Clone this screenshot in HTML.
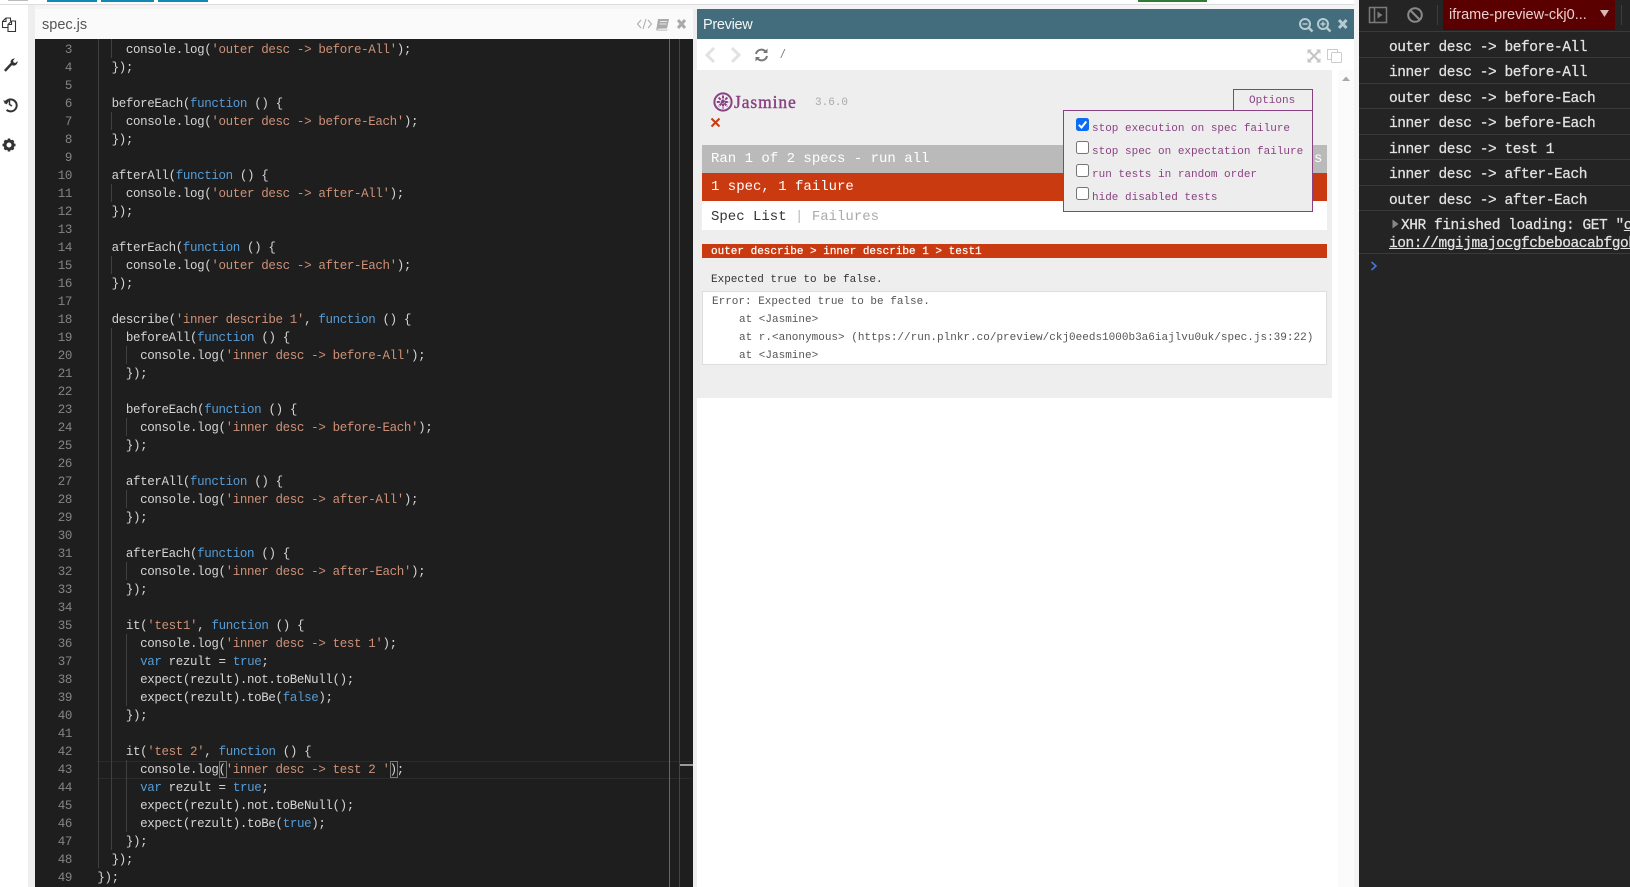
<!DOCTYPE html>
<html lang="en">
<head>
<meta charset="utf-8">
<title>spec.js - Plunker</title>
<style>
html,body{margin:0;padding:0;width:1630px;height:887px;overflow:hidden;background:#f4f4f4;font-family:"Liberation Sans",sans-serif}
.a{position:absolute}
#code,#nums{position:absolute;top:41px;margin:0;font:12.5px/18px "Liberation Mono",monospace;letter-spacing:-.375px;color:#d4d4d4;white-space:pre}
#code{left:97.4px}
#nums{left:35px;width:37px;text-align:right;color:#858585}
.k{color:#569cd6}.s{color:#ce9178}
.g{position:absolute;width:1px;background:#404040}
.m{font-family:"Liberation Mono",monospace;white-space:pre}
.con{position:absolute;left:1389px;font:14.5px/18px "Liberation Mono",monospace;letter-spacing:-.45px;color:#e2e2e2;white-space:pre;-webkit-text-stroke:.25px #e2e2e2}
.dl{position:absolute;left:1359px;right:0;height:1px;background:#3a3a3a}
.cb{position:absolute;left:1076px;width:11px;height:11px;border:1px solid #767676;border-radius:2.5px;background:#fff}
.ol{position:absolute;left:1092px;font:11px/14px "Liberation Mono",monospace;color:#8a4182;white-space:pre}
.tr{position:absolute;left:739px;font:11px/18px "Liberation Mono",monospace;color:#555;white-space:pre}
</style>
</head>
<body>
<!-- top strip -->
<div class="a" style="left:0;top:0;width:1630px;height:4px;background:#fff"></div>
<div class="a" style="left:0;top:4px;width:1630px;height:1px;background:#ddd"></div>
<div class="a" style="left:8px;top:0;width:20px;height:1px;background:#bbb"></div>
<div class="a" style="left:47px;top:0;width:50px;height:2px;background:#0e8ab5"></div>
<div class="a" style="left:101px;top:0;width:53px;height:2px;background:#0e8ab5"></div>
<div class="a" style="left:158px;top:0;width:50px;height:2px;background:#0e8ab5"></div>
<div class="a" style="left:1138px;top:0;width:69px;height:2px;background:#2e7d32"></div>

<!-- left sidebar -->
<div class="a" style="left:0;top:5px;width:28px;height:882px;background:#fff"></div>
<div class="a" style="left:28px;top:5px;width:7px;height:882px;background:#eeeeee"></div>
<svg class="a" style="left:0;top:14px" width="28" height="160" viewBox="0 0 28 160" fill="none">
<path d="M8 13.500H2.500V7.500L6 4h4.500v3" stroke="#333" stroke-width="1.100"/>
<path d="M6 4v3.500H2.500" stroke="#333" stroke-width="1"/>
<path d="M11.500 7H15.500V17.500H8V10.500zM11.500 7v3.500H8" stroke="#333" stroke-width="1.100"/>
<g transform="translate(0,-1)">
<path d="M4 57l7-7.500 1.800 1.800-7 7.500zM10.500 49a4 4 0 0 1 4.500-3.500l-2 2.200.7 1.800 1.800.5 2-2a4 4 0 0 1-5 4.500z" fill="#333"/>
</g>
<g transform="translate(0,3)">
<path d="M5 86.500a6 6 0 1 1 1.600 6.300" stroke="#333" stroke-width="2"/>
<path d="M3 83.500l3.500 4 2.500-3.500z" fill="#333"/>
<path d="M9.500 83.500v4l2.500 1.500" stroke="#333" stroke-width="1.500"/>
</g>
<circle cx="9" cy="131" r="4" stroke="#333" stroke-width="3"/>
<path d="M9 124.500v2.500M9 135v2.500M2.500 131H5M13 131h2.500M4.500 126.500l1.700 1.700M11.800 133.800l1.700 1.700M4.500 135.500l1.700-1.700M11.800 128.200l1.700-1.700" stroke="#333" stroke-width="2.400"/>
</svg>

<!-- editor -->
<div class="a" style="left:35px;top:9px;width:658px;height:30px;background:#fafafa"></div>
<div class="a" style="left:42px;top:16px;font-size:14.500px;line-height:18px;color:#555">spec.js</div>
<svg class="a" style="left:636px;top:16px" width="52" height="16" viewBox="0 0 52 16" fill="none">
<path d="M5 4L1.500 8 5 12M12 4l3.500 4L12 12M10 3L7 13" stroke="#aaa" stroke-width="1"/>
<path d="M22 3h11l-2 9.500H20.500zM20.500 12.500c-.8 1.500 0 2 1 2H31l.5-1.200" fill="#aaa"/>
<path d="M24 5.500h7M23.500 8h7" stroke="#fafafa" stroke-width=".8"/>
<path d="M21.500 13.300H31" stroke="#fafafa" stroke-width=".8"/>
<path d="M42 4l7 8M49 4l-7 8" stroke="#aaa" stroke-width="3"/>
</svg>
<div class="a" style="left:35px;top:39px;width:658px;height:848px;background:#1e1e1e;overflow:hidden"></div>

<div class="a" style="left:97px;top:761px;width:594px;height:16px;border:solid #2b2b2b;border-width:1px 0"></div>

<!-- indent guides -->
<div class="g" style="left:97.700px;top:39px;height:829px"></div>
<div class="g" style="left:111.400px;top:39px;height:19px"></div>
<div class="g" style="left:111.400px;top:112px;height:18px"></div>
<div class="g" style="left:111.400px;top:184px;height:18px"></div>
<div class="g" style="left:111.400px;top:256px;height:18px"></div>
<div class="g" style="left:111.400px;top:328px;height:522px"></div>
<div class="g" style="left:126px;top:346px;height:18px"></div>
<div class="g" style="left:126px;top:418px;height:18px"></div>
<div class="g" style="left:126px;top:490px;height:18px"></div>
<div class="g" style="left:126px;top:562px;height:18px"></div>
<div class="g" style="left:126px;top:634px;height:72px"></div>
<div class="g" style="left:126px;top:760px;height:72px"></div>

<pre id="nums">3
4
5
6
7
8
9
10
11
12
13
14
15
16
17
18
19
20
21
22
23
24
25
26
27
28
29
30
31
32
33
34
35
36
37
38
39
40
41
42
43
44
45
46
47
48
49</pre>
<pre id="code">    console.log(<span class="s">'outer desc -&gt; before-All'</span>);
  });

  beforeEach(<span class="k">function</span> () {
    console.log(<span class="s">'outer desc -&gt; before-Each'</span>);
  });

  afterAll(<span class="k">function</span> () {
    console.log(<span class="s">'outer desc -&gt; after-All'</span>);
  });

  afterEach(<span class="k">function</span> () {
    console.log(<span class="s">'outer desc -&gt; after-Each'</span>);
  });

  describe(<span class="s">'inner describe 1'</span>, <span class="k">function</span> () {
    beforeAll(<span class="k">function</span> () {
      console.log(<span class="s">'inner desc -&gt; before-All'</span>);
    });

    beforeEach(<span class="k">function</span> () {
      console.log(<span class="s">'inner desc -&gt; before-Each'</span>);
    });

    afterAll(<span class="k">function</span> () {
      console.log(<span class="s">'inner desc -&gt; after-All'</span>);
    });

    afterEach(<span class="k">function</span> () {
      console.log(<span class="s">'inner desc -&gt; after-Each'</span>);
    });

    it(<span class="s">'test1'</span>, <span class="k">function</span> () {
      console.log(<span class="s">'inner desc -&gt; test 1'</span>);
      <span class="k">var</span> rezult = <span class="k">true</span>;
      expect(rezult).not.toBeNull();
      expect(rezult).toBe(<span class="k">false</span>);
    });

    it(<span class="s">'test 2'</span>, <span class="k">function</span> () {
      console.log(<span class="s">'inner desc -&gt; test 2 '</span>);
      <span class="k">var</span> rezult = <span class="k">true</span>;
      expect(rezult).not.toBeNull();
      expect(rezult).toBe(<span class="k">true</span>);
    });
  });
});</pre>
<div class="a" style="left:219px;top:761px;width:6px;height:15px;border:1px solid #777"></div>
<div class="a" style="left:390px;top:761px;width:6px;height:15px;border:1px solid #777"></div>
<div class="a" style="left:669px;top:39px;width:1px;height:848px;background:#666"></div>
<div class="a" style="left:679px;top:39px;width:1px;height:848px;background:#444"></div>
<div class="a" style="left:680px;top:764px;width:13px;height:2px;background:#999"></div>

<!-- preview -->
<div class="a" style="left:693px;top:9px;width:4px;height:878px;background:#eee"></div>
<div class="a" style="left:697px;top:9px;width:657px;height:30px;background:#436c7c"></div>
<div class="a" style="left:703px;top:16px;font-size:14.500px;line-height:18px;color:#f2f6f7;letter-spacing:-.3px">Preview</div>
<svg class="a" style="left:1296px;top:15px" width="56" height="20" viewBox="0 0 56 20" fill="none">
<circle cx="9" cy="9" r="5" stroke="#b5cbd2" stroke-width="2"/>
<path d="M13 13l3.500 3.500" stroke="#b5cbd2" stroke-width="2.500"/>
<path d="M6.500 9h5" stroke="#b5cbd2" stroke-width="1.500"/>
<circle cx="27" cy="9" r="5" stroke="#b5cbd2" stroke-width="2"/>
<path d="M31 13l3.500 3.500" stroke="#b5cbd2" stroke-width="2.500"/>
<path d="M24.500 9h5M27 6.500v5" stroke="#b5cbd2" stroke-width="1.500"/>
<path d="M43 5l7.500 8M50.500 5L43 13" stroke="#b5cbd2" stroke-width="3"/>
</svg>

<div class="a" style="left:697px;top:39px;width:657px;height:848px;background:#fff"></div>
<svg class="a" style="left:700px;top:45px" width="76" height="20" viewBox="0 0 76 20" fill="none">
<path d="M14 3L7 10l7 7" stroke="#e2e2e2" stroke-width="3"/>
<path d="M32 3l7 7-7 7" stroke="#e2e2e2" stroke-width="3"/>
<g transform="translate(6,0)">
<path d="M50 9a5.500 5.500 0 0 1 9.500-2.500M61 11a5.500 5.500 0 0 1-9.500 2.500" stroke="#777" stroke-width="2"/>
<path d="M61.500 3.500v4.500H57zM49.500 16.500V12H54z" fill="#777"/>
</g>
</svg>
<div class="a" style="left:781px;top:46px;font-size:12px;line-height:16px;color:#777;font-style:italic">/</div>
<svg class="a" style="left:1306px;top:48px" width="38" height="16" viewBox="0 0 38 16" fill="none">
<path d="M3 3l10 10M13 3L3 13" stroke="#c4c4c4" stroke-width="2"/>
<path d="M1.500 1.500h4.500l-4.500 4.500zM14.500 1.500H10l4.500 4.500zM1.500 14.500H6L1.500 10zM14.500 14.500H10l4.500-4.500z" fill="#c4c4c4"/>
<rect x="21.500" y="1.500" width="10" height="10" stroke="#ccc" fill="#fff"/>
<rect x="25.500" y="4.500" width="10" height="10" rx="1" stroke="#ccc" fill="#fff"/>
</svg>

<!-- jasmine reporter -->
<div class="a" style="left:697px;top:70px;width:635px;height:328px;background:#eeeeee"></div>
<div class="a" style="left:1338px;top:70px;width:16px;height:817px;background:#fbfbfb"></div>
<svg class="a" style="left:1341px;top:75px" width="10" height="7" viewBox="0 0 10 7"><path d="M1 6L5 1.500 9 6z" fill="#a8a8a8"/></svg>
<svg class="a" style="left:712px;top:91px" width="22" height="22" viewBox="0 0 22 22" fill="none">
<circle cx="11" cy="11" r="8.600" stroke="#8a4182" stroke-width="2"/>
<path d="M11 4.500v13M4.800 11h12.400M6.600 6.600l8.800 8.800M15.400 6.600l-8.800 8.800" stroke="#8a4182" stroke-width="2" stroke-dasharray="3 1"/>
</svg>
<div class="a" style="left:734px;top:91px;font:17.500px/22px 'Liberation Serif',serif;color:#8a4182;letter-spacing:.9px;-webkit-text-stroke:.4px #8a4182">Jasmine</div>
<div class="a m" style="left:815px;top:96px;font-size:11px;line-height:14px;color:#aaa">3.6.0</div>
<svg class="a" style="left:710px;top:117px" width="11" height="11" viewBox="0 0 11 11"><path d="M1.500 1.500l8 8M9.500 1.500l-8 8" stroke="#ca3a11" stroke-width="2"/></svg>

<div class="a" style="left:702px;top:145px;width:625px;height:28px;background:#bababa"></div>
<div class="a m" style="left:711px;top:150px;font-size:14px;line-height:18px;color:#fff">Ran 1 of 2 specs - run all</div>
<div class="a m" style="left:1314px;top:150px;font-size:14px;line-height:18px;color:#fff;width:13px;overflow:hidden">s</div>
<div class="a" style="left:702px;top:173px;width:625px;height:28px;background:#ca3a11"></div>
<div class="a m" style="left:711px;top:178px;font-size:14px;line-height:18px;color:#fff">1 spec, 1 failure</div>
<div class="a" style="left:702px;top:201px;width:625px;height:29px;background:#fff"></div>
<div class="a m" style="left:711px;top:207.500px;font-size:14px;line-height:18px;color:#333">Spec List <span style="color:#bbb">|</span> <span style="color:#aaa">Failures</span></div>

<div class="a" style="left:702px;top:244px;width:625px;height:14px;background:#ca3a11"></div>
<div class="a m" style="left:711px;top:244.500px;font-size:11px;line-height:14px;color:#fff;-webkit-text-stroke:.2px #fff">outer describe &gt; inner describe 1 &gt; test1</div>
<div class="a m" style="left:711px;top:272.500px;font-size:11px;line-height:14px;color:#333">Expected true to be false.</div>
<div class="a" style="left:702px;top:291px;width:623px;height:72px;background:#fff;border:1px solid #ddd"></div>
<div class="tr" style="left:712px;top:292.500px">Error: Expected true to be false.</div>
<div class="tr" style="top:310.500px">at &lt;Jasmine&gt;</div>
<div class="tr" style="top:328.500px">at r.&lt;anonymous&gt; (https://run.plnkr.co/preview/ckj0eeds1000b3a6iajlvu0uk/spec.js:39:22)</div>
<div class="tr" style="top:346.500px">at &lt;Jasmine&gt;</div>

<!-- options -->
<div class="a" style="left:1233px;top:89px;width:78px;height:20px;background:#eeeeee;border:1px solid #8a4182;border-bottom:0"></div>
<div class="a m" style="left:1249px;top:93.500px;font-size:11px;line-height:14px;color:#8a4182">Options</div>
<div class="a" style="left:1063px;top:110px;width:248px;height:100px;background:#eeedee;border:1px solid #8a4182"></div>
<div class="a" style="left:1076px;top:118px;width:13px;height:13px;border-radius:2.500px;background:#0b6cf0"></div>
<svg class="a" style="left:1076px;top:118px" width="13" height="13" viewBox="0 0 13 13" fill="none"><path d="M2.800 6.800l2.700 2.700 4.800-6" stroke="#fff" stroke-width="2"/></svg>
<div class="cb" style="top:141px"></div>
<div class="cb" style="top:164px"></div>
<div class="cb" style="top:187px"></div>
<div class="ol" style="top:121.500px">stop execution on spec failure</div>
<div class="ol" style="top:144.500px">stop spec on expectation failure</div>
<div class="ol" style="top:167.500px">run tests in random order</div>
<div class="ol" style="top:190.500px">hide disabled tests</div>

<!-- devtools -->
<div class="a" style="left:1354px;top:0;width:5px;height:887px;background:#f4f4f4"></div>
<div class="a" style="left:1359px;top:0;width:271px;height:887px;background:#242424"></div>
<svg class="a" style="left:1368px;top:6px" width="60" height="20" viewBox="0 0 60 20" fill="none">
<rect x="1.500" y="1.500" width="17" height="15" stroke="#7a7a7a" stroke-width="1.500"/>
<path d="M6.500 1.500v15" stroke="#7a7a7a" stroke-width="1.500"/>
<path d="M9.500 5.500l5 3.500-5 3.500z" fill="#7a7a7a"/>
<circle cx="47" cy="9" r="6.800" stroke="#8a8a8a" stroke-width="2"/>
<path d="M42.500 4.500l9 9" stroke="#8a8a8a" stroke-width="2"/>
</svg>
<div class="a" style="left:1437px;top:5px;width:1px;height:20px;background:#3d3d3d"></div>
<div class="a" style="left:1443px;top:0;width:172px;height:30px;background:#5a0000"></div>
<div class="a" style="left:1449px;top:6px;font-size:14.500px;line-height:18px;color:#eccfcf;white-space:nowrap">iframe-preview-ckj0...</div>
<svg class="a" style="left:1599px;top:9px" width="11" height="9" viewBox="0 0 11 9"><path d="M1 1h9L5.500 8z" fill="#d8b8b8"/></svg>
<div class="a" style="left:1621px;top:5px;width:1px;height:20px;background:#3d3d3d"></div>

<div class="dl" style="top:31px"></div>
<div class="dl" style="top:57px"></div>
<div class="dl" style="top:83px"></div>
<div class="dl" style="top:108px"></div>
<div class="dl" style="top:134px"></div>
<div class="dl" style="top:159px"></div>
<div class="dl" style="top:185px"></div>
<div class="dl" style="top:210px"></div>
<div class="dl" style="top:253px"></div>

<div class="con" style="top:39px">outer desc -&gt; before-All</div>
<div class="con" style="top:64px">inner desc -&gt; before-All</div>
<div class="con" style="top:90px">outer desc -&gt; before-Each</div>
<div class="con" style="top:115px">inner desc -&gt; before-Each</div>
<div class="con" style="top:141px">inner desc -&gt; test 1</div>
<div class="con" style="top:166px">inner desc -&gt; after-Each</div>
<div class="con" style="top:192px">outer desc -&gt; after-Each</div>
<svg class="a" style="left:1392px;top:219px" width="7" height="10" viewBox="0 0 7 10"><path d="M0.500 0.500L6.500 5 .5 9.500z" fill="#888"/></svg>
<div class="con" style="left:1401px;top:217px;width:229px;overflow:hidden">XHR finished loading: GET "<u>c</u></div>
<div class="con" style="top:235px;width:241px;overflow:hidden"><u>ion://mgijmajocgfcbeboacabfgob</u></div>
<svg class="a" style="left:1370px;top:261px" width="8" height="10" viewBox="0 0 8 10" fill="none"><path d="M1.500 1l4.500 4-4.500 4" stroke="#3f77d6" stroke-width="1.600"/></svg>
</body>
</html>
